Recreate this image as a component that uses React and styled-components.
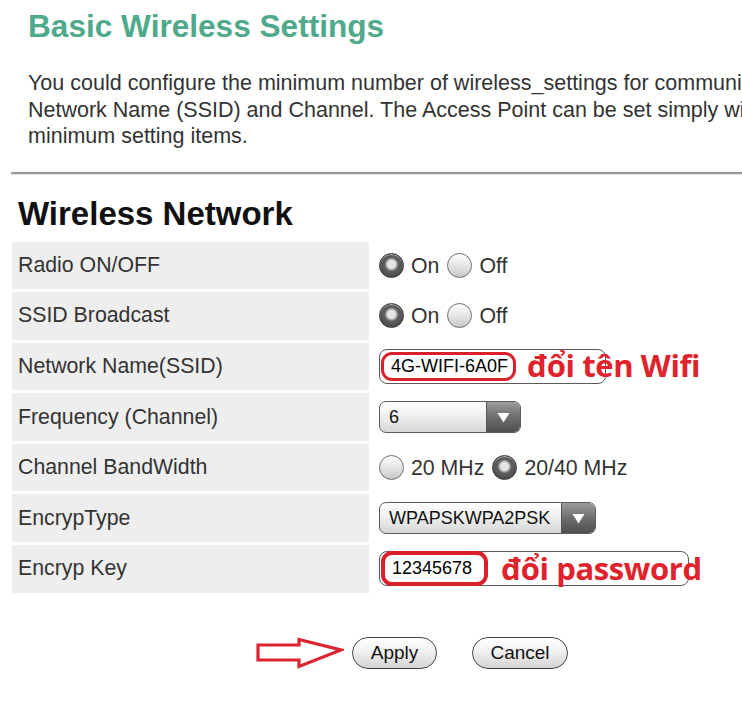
import React from "react";
import styled, { createGlobalStyle } from "styled-components";

const Global = createGlobalStyle`
  html, body { margin: 0; padding: 0; background: #fff; overflow: hidden; }
  body { font-family: "Liberation Sans", Arial, sans-serif; }
`;

const Page = styled.div`
  width: 840px;
  box-sizing: border-box;
  padding: 8px 0 40px 11px;
`;

const Title = styled.h1`
  margin: 0 0 0 17px;
  font: 700 31.6px/36px "Liberation Sans", Arial, sans-serif;
  color: #4fa98b;
`;

const Intro = styled.p`
  margin: 26px 0 0 17px;
  font-size: 21.5px;
  line-height: 26.5px;
  color: #333;
  white-space: nowrap;
`;

const Divider = styled.div`
  margin-top: 22px;
  height: 2px;
  background: #9a9a9a;
  border-bottom: 1px solid #e2e2e2;
`;

const SectionTitle = styled.h2`
  margin: 20px 0 0 7px;
  font: 700 33px/38px "Liberation Sans", Arial, sans-serif;
  color: #111;
`;

const Table = styled.div`
  margin: 9px 0 0 1px;
  display: grid;
  grid-template-columns: 357px 1fr;
  grid-auto-rows: 47.6px;
  row-gap: 3px;
  column-gap: 3px;
`;

const Label = styled.div`
  background: #eeeeee;
  display: flex;
  align-items: center;
  padding-left: 6px;
  font-size: 21.3px;
  color: #333;
`;

const Value = styled.div`
  display: flex;
  align-items: center;
  padding-left: 7px;
  font-size: 21.3px;
  color: #333;
`;

const RadioDot = styled.span`
  box-sizing: border-box;
  width: 25px;
  height: 25px;
  border-radius: 50%;
  flex: none;
  margin-left: ${(p) => (p.$first ? "0" : "8px")};
  border: 1.5px solid ${(p) => (p.$checked ? "#333" : "#6e6e6e")};
  background: ${(p) =>
    p.$checked
      ? "radial-gradient(circle at 50% 45%, #e4e4e4 0 4px, #b5b5b5 5px, #5e5e5e 7px, #3e3e3e 100%)"
      : "linear-gradient(#ffffff, #dadada 70%, #c8c8c8)"};
  box-shadow: inset 0 1px 1px rgba(255, 255, 255, 0.6);
`;

const RadioText = styled.span`
  margin-left: 7px;
  font-size: 21.3px;
  color: #333;
  line-height: 1;
  padding-top: 2px;
`;

const FieldWrap = styled.div`
  position: relative;
  display: flex;
  align-items: center;
`;

const TextBox = styled.div`
  box-sizing: border-box;
  width: ${(p) => p.$w}px;
  height: 35px;
  border: 1.5px solid #5a5a5a;
  border-radius: 8px;
  background: #fff;
  display: flex;
  align-items: center;
  padding-left: 1px;
`;

const Marked = styled.span`
  box-sizing: border-box;
  height: ${(p) => p.$h}px;
  border: ${(p) => p.$b}px solid #d9212b;
  border-radius: 11px;
  display: flex;
  align-items: center;
  padding: 0 ${(p) => p.$pad}px 0 7px;
  font-size: 18px;
  color: #000;
`;

const Note = styled.span`
  position: absolute;
  left: ${(p) => p.$left}px;
  top: 50%;
  transform: translateY(-52%);
  font: 700 31px/1 "Open Sans", "Noto Sans", sans-serif;
  color: #e0222c;
  white-space: nowrap;
  letter-spacing: -0.4px;
`;

const Select = styled.div`
  box-sizing: border-box;
  width: ${(p) => p.$w}px;
  height: 32px;
  border: 1.5px solid #5c5c5c;
  border-radius: 7px;
  overflow: hidden;
  display: flex;
  background: linear-gradient(#ffffff, #eeeeee 50%, #d6d6d6);
`;

const SelectText = styled.span`
  flex: 1;
  display: flex;
  align-items: center;
  padding-left: 9px;
  font-size: 18px;
  color: #111;
`;

const SelectButton = styled.span`
  width: 33px;
  flex: none;
  display: flex;
  align-items: center;
  justify-content: center;
  border-left: 1px solid #555;
  background: linear-gradient(#9c9c9c, #6e6e6e 50%, #4f4f4f);
`;

const Actions = styled.div`
  margin-top: 44px;
  padding-left: 245px;
  display: flex;
  align-items: center;
`;

const Arrow = styled.svg`
  width: 88px;
  height: 32px;
  margin-right: 8px;
`;

const PillButton = styled.button`
  box-sizing: border-box;
  height: 32px;
  width: ${(p) => p.$w}px;
  margin-left: ${(p) => p.$ml}px;
  border: 1.5px solid #454545;
  border-radius: 16px;
  background: linear-gradient(#ffffff, #f0f0f0 45%, #d4d4d4);
  font: 400 19px "Liberation Sans", Arial, sans-serif;
  color: #111;
  padding: 0;
`;

const Triangle = () => (
  <svg width="13" height="11" viewBox="0 0 13 11">
    <path d="M0.5 1 H12.5 L6.5 10.5 Z" fill="#fff" />
  </svg>
);

const RadioGroup = ({ options, checked }) => (
  <>
    {options.map((o, i) => (
      <React.Fragment key={o}>
        <RadioDot $first={i === 0} $checked={i === checked} />
        <RadioText>{o}</RadioText>
      </React.Fragment>
    ))}
  </>
);

export default function App() {
  return (
    <>
      <Global />
      <Page>
        <Title>Basic Wireless Settings</Title>
        <Intro>
          You could configure the minimum number of wireless_settings for communication, such as
          <br />
          Network Name (SSID) and Channel. The Access Point can be set simply with only the
          <br />
          minimum setting items.
        </Intro>
        <Divider />
        <SectionTitle>Wireless Network</SectionTitle>
        <Table>
          <Label>Radio ON/OFF</Label>
          <Value>
            <RadioGroup options={["On", "Off"]} checked={0} />
          </Value>

          <Label>SSID Broadcast</Label>
          <Value>
            <RadioGroup options={["On", "Off"]} checked={0} />
          </Value>

          <Label>Network Name(SSID)</Label>
          <Value>
            <FieldWrap>
              <TextBox $w={227}>
                <Marked $h={29} $b={3} $pad={5}>4G-WIFI-6A0F</Marked>
              </TextBox>
              <Note $left={148}>đổi tên Wifi</Note>
            </FieldWrap>
          </Value>

          <Label>Frequency (Channel)</Label>
          <Value>
            <Select $w={142}>
              <SelectText>6</SelectText>
              <SelectButton>
                <Triangle />
              </SelectButton>
            </Select>
          </Value>

          <Label>Channel BandWidth</Label>
          <Value>
            <RadioGroup options={["20 MHz", "20/40 MHz"]} checked={1} />
          </Value>

          <Label>EncrypType</Label>
          <Value>
            <Select $w={217}>
              <SelectText>WPAPSKWPA2PSK</SelectText>
              <SelectButton>
                <Triangle />
              </SelectButton>
            </Select>
          </Value>

          <Label>Encryp Key</Label>
          <Value>
            <FieldWrap>
              <TextBox $w={310}>
                <Marked $h={35} $b={4} $pad={12}>12345678</Marked>
              </TextBox>
              <Note $left={122}>đổi password</Note>
            </FieldWrap>
          </Value>
        </Table>
        <Actions>
          <Arrow viewBox="0 0 88 32">
            <path
              d="M2 8 H43 V2.5 L85 13 L43 29.5 V23 H2 Z"
              fill="none"
              stroke="#dc2430"
              strokeWidth="3.2"
              strokeLinejoin="miter"
            />
          </Arrow>
          <PillButton $w={85} $ml={0}>Apply</PillButton>
          <PillButton $w={96} $ml={35}>Cancel</PillButton>
        </Actions>
      </Page>
    </>
  );
}
